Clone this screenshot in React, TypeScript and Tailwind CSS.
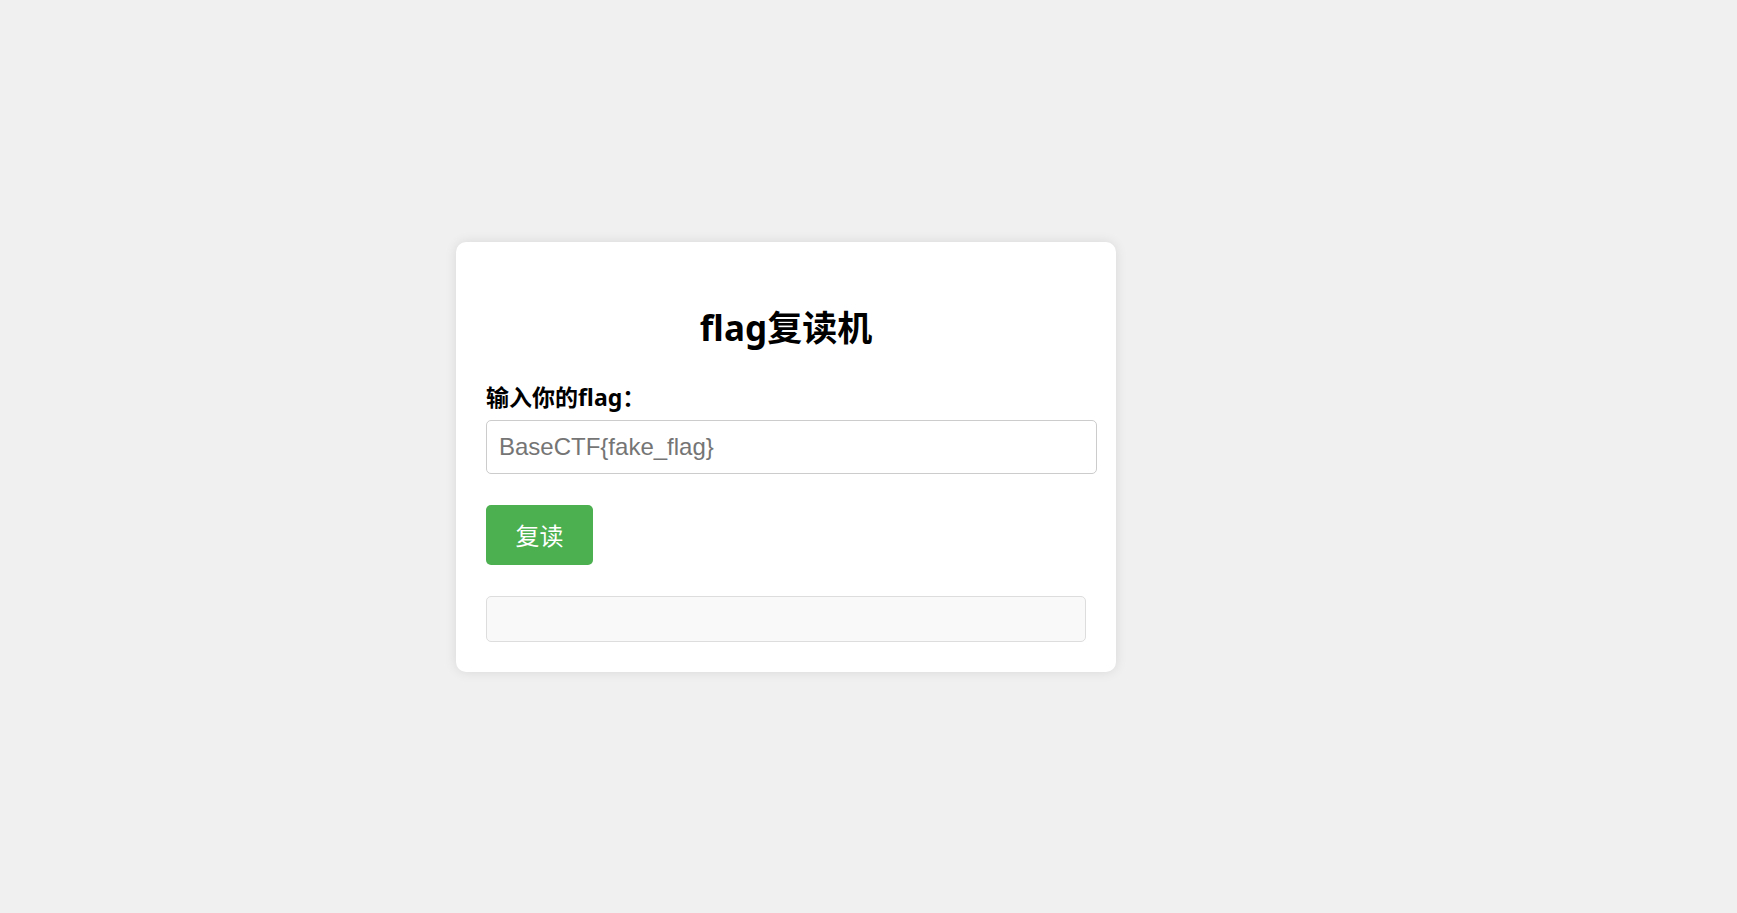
import React from "react";

export default function App() {
  return (
    <div className="min-h-screen w-full bg-[#f0f0f0]">
      <div className="flex h-[913px] w-[1572px] items-center justify-center">
        <div className="flex w-[660px] flex-col rounded-[10px] bg-white px-[30px] pb-[30px] pt-[61px] shadow-[0_0_12px_rgba(0,0,0,0.1)]">
          <h1
            className="text-center text-[35px] font-bold leading-[50px] text-black"
            style={{ fontFamily: '"Noto Sans", "Noto Sans CJK SC", sans-serif' }}
          >
            flag复读机
          </h1>
          <label
            className="mt-[28px] block text-[23px] font-bold leading-[32px] text-black"
            style={{ fontFamily: '"Noto Sans", "Noto Sans CJK SC", sans-serif' }}
          >
            输入你的flag：
          </label>
          <input
            type="text"
            placeholder="BaseCTF{fake_flag}"
            className="mt-[7px] h-[54px] w-[611px] rounded-[5px] border border-[#cccccc] bg-white px-[12px] text-[24px] text-black placeholder:text-[#757575] outline-none"
            style={{ fontFamily: '"Liberation Sans", Arial, sans-serif' }}
          />
          <button
            type="button"
            className="mt-[31px] flex h-[60px] w-[107px] items-center justify-center rounded-[5px] bg-[#4caf50] text-[24px] text-white"
            style={{ fontFamily: '"Noto Sans CJK SC", sans-serif' }}
          >
            复读
          </button>
          <div className="mt-[31px] h-[46px] w-[600px] rounded-[5px] border border-[#dddddd] bg-[#f9f9f9]" />
        </div>
      </div>
    </div>
  );
}
